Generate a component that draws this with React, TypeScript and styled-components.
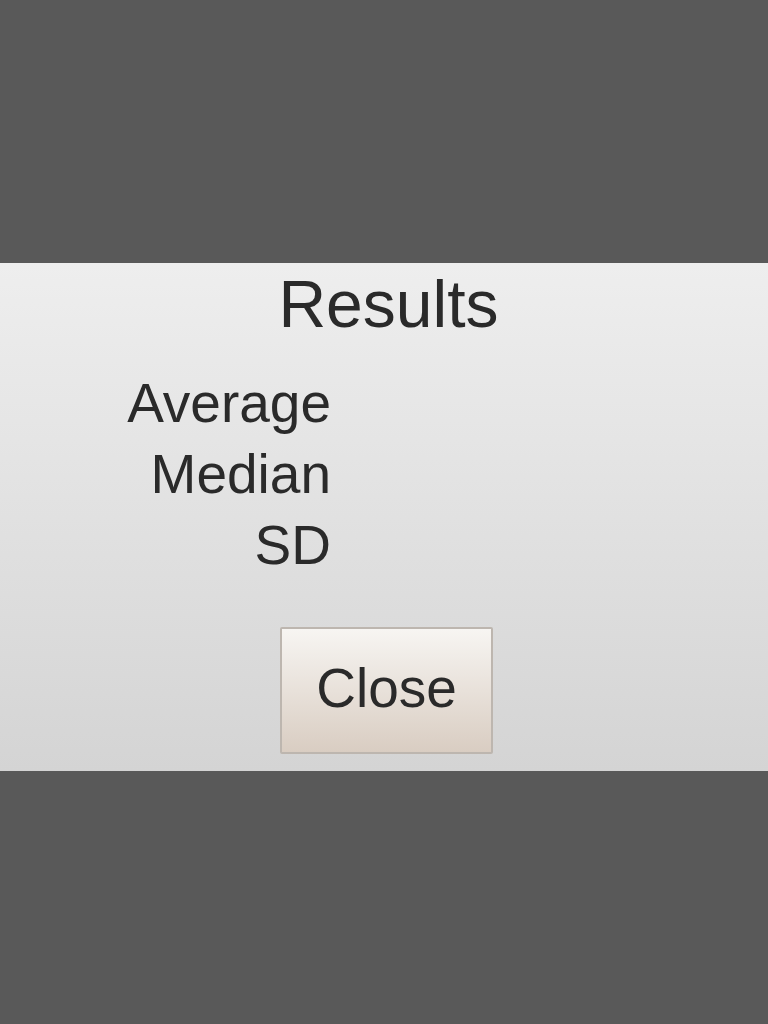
import styled, { createGlobalStyle } from "styled-components";

const GlobalStyle = createGlobalStyle`
  html, body {
    margin: 0;
    padding: 0;
    background: #595959;
  }
  body {
    font-family: "Liberation Sans", Arial, sans-serif;
    color: #2a2a2a;
  }
`;

const Screen = styled.div`
  min-height: 1024px;
  padding-top: 263px;
  box-sizing: border-box;
`;

const Panel = styled.section`
  display: flex;
  flex-direction: column;
  align-items: center;
  box-sizing: border-box;
  height: 508px;
  padding: 5px 0 17px 9px;
  background: linear-gradient(#eeeeee, #d4d4d4);
`;

const Title = styled.h1`
  margin: 0;
  font-size: 66px;
  font-weight: normal;
  line-height: 72px;
`;

const StatList = styled.dl`
  align-self: stretch;
  display: grid;
  grid-template-columns: 322px 1fr;
  margin: 28px 0 0 0;
  font-size: 55px;
  line-height: 71px;
`;

const StatLabel = styled.dt`
  grid-column: 1;
  text-align: right;
`;

const StatValue = styled.dd`
  grid-column: 2;
  margin: 0;
  padding-left: 20px;
`;

const CloseButton = styled.button`
  display: flex;
  align-items: center;
  justify-content: center;
  width: 213px;
  height: 127px;
  margin-top: 46px;
  margin-left: -4px;
  padding: 0 0 4px 0;
  border: 2px solid #bdb6af;
  border-radius: 2px;
  background: linear-gradient(#f7f5f2, #d9cdc2);
  font-family: "Liberation Sans", Arial, sans-serif;
  font-size: 55px;
  line-height: 1;
  color: #2a2a2a;
  cursor: pointer;
`;

const stats = [
  { label: "Average", value: "" },
  { label: "Median", value: "" },
  { label: "SD", value: "" },
];

const App = () => {
  return (
    <>
      <GlobalStyle />
      <Screen>
        <Panel>
          <Title>Results</Title>
          <StatList>
            {stats.map((s) => [
              <StatLabel key={s.label}>{s.label}</StatLabel>,
              <StatValue key={s.label + "-v"}>{s.value}</StatValue>,
            ])}
          </StatList>
          <CloseButton>Close</CloseButton>
        </Panel>
      </Screen>
    </>
  );
};

export default App;
